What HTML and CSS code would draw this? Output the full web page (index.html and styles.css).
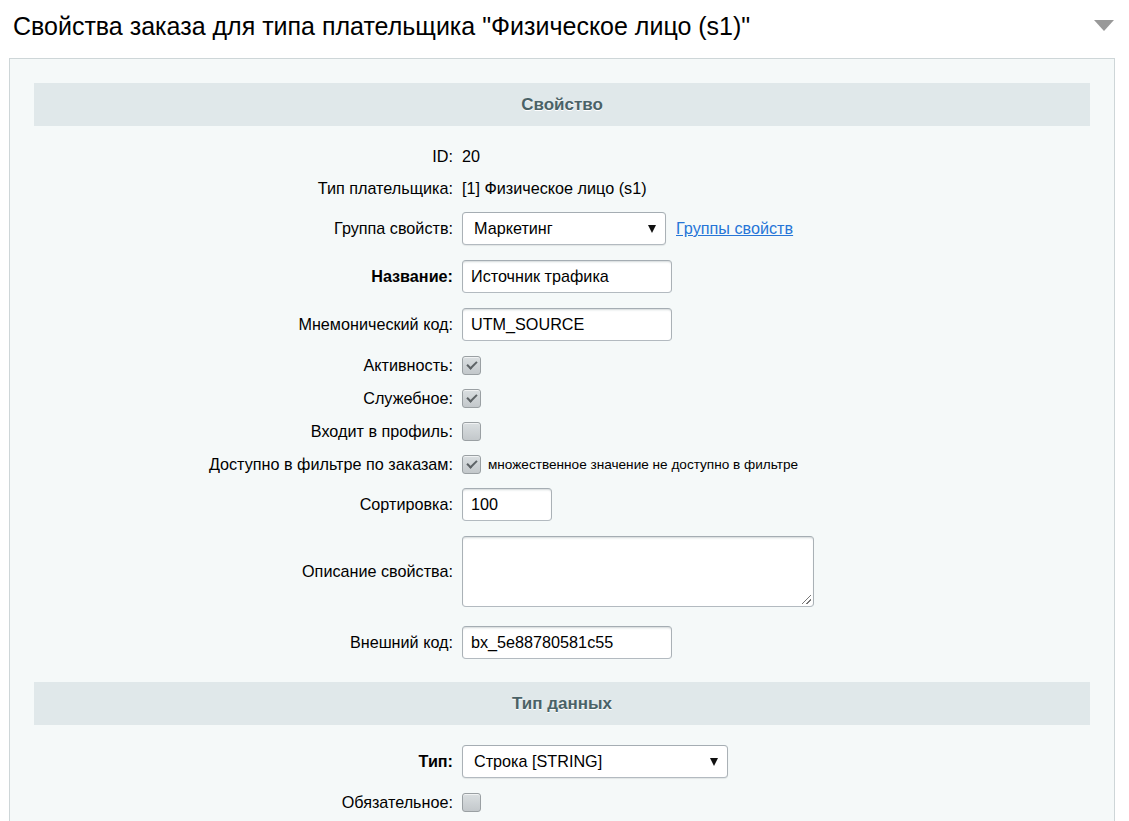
FILE: index.html
```html
<!DOCTYPE html>
<html lang="ru">
<head>
<meta charset="utf-8">
<title>Свойства заказа</title>
<link rel="stylesheet" href="styles.css">
</head>
<body>
<div class="page">
  <div class="title-bar">
    <h1 class="title">Свойства заказа для типа плательщика "Физическое лицо (s1)"</h1>
    <span class="collapse"></span>
  </div>
  <div class="panel">
    <div class="section-head">Свойство</div>
    <div class="row text-row">
      <div class="label">ID:</div>
      <div class="value">20</div>
    </div>
    <div class="row text-row">
      <div class="label">Тип плательщика:</div>
      <div class="value">[1] Физическое лицо (s1)</div>
    </div>
    <div class="row field-row">
      <div class="label">Группа свойств:</div>
      <div class="value">
        <div class="select sel-group"><span>Маркетинг</span><span class="arrow"></span></div>
        <a class="link" href="#">Группы свойств</a>
      </div>
    </div>
    <div class="row field-row">
      <div class="label bold">Название:</div>
      <div class="value"><div class="input w-name">Источник трафика</div></div>
    </div>
    <div class="row field-row">
      <div class="label">Мнемонический код:</div>
      <div class="value"><div class="input w-name">UTM_SOURCE</div></div>
    </div>
    <div class="row check-row">
      <div class="label">Активность:</div>
      <div class="value"><span class="cb checked"></span></div>
    </div>
    <div class="row check-row">
      <div class="label">Служебное:</div>
      <div class="value"><span class="cb checked"></span></div>
    </div>
    <div class="row check-row">
      <div class="label">Входит в профиль:</div>
      <div class="value"><span class="cb"></span></div>
    </div>
    <div class="row check-row">
      <div class="label">Доступно в фильтре по заказам:</div>
      <div class="value"><span class="cb checked"></span><span class="note">множественное значение не доступно в фильтре</span></div>
    </div>
    <div class="row field-row">
      <div class="label">Сортировка:</div>
      <div class="value"><div class="input w-sort">100</div></div>
    </div>
    <div class="row area-row">
      <div class="label">Описание свойства:</div>
      <div class="value"><div class="textarea"><span class="grip"></span></div></div>
    </div>
    <div class="row field-row">
      <div class="label">Внешний код:</div>
      <div class="value"><div class="input w-name">bx_5e88780581c55</div></div>
    </div>
    <div class="section-head second">Тип данных</div>
    <div class="row field-row">
      <div class="label bold">Тип:</div>
      <div class="value">
        <div class="select sel-type"><span>Строка [STRING]</span><span class="arrow"></span></div>
      </div>
    </div>
    <div class="row check-row">
      <div class="label">Обязательное:</div>
      <div class="value"><span class="cb"></span></div>
    </div>
  </div>
</div>
</body>
</html>
```

FILE: styles.css
```css
html, body {
  margin: 0;
  padding: 0;
  background: #fff;
}
body {
  font-family: "Liberation Sans", Arial, sans-serif;
  color: #000;
  overflow: hidden;
}
.page {
  padding: 0 14px 0 9px;
}
.title-bar {
  display: flex;
  align-items: center;
  justify-content: space-between;
  height: 58px;
  padding: 0 1px 0 4px;
}
.title {
  margin: 0;
  font-size: 25px;
  font-weight: normal;
  line-height: 28px;
  padding-bottom: 6px;
}
.collapse {
  width: 0;
  height: 0;
  border-left: 10px solid transparent;
  border-right: 10px solid transparent;
  border-top: 11px solid #999;
  margin-bottom: 8px;
}
.panel {
  background: #f5f9f9;
  border: 1px solid #ced6d8;
  border-bottom: 0;
  padding: 24px 24px 40px;
  min-height: 800px;
}
.section-head {
  height: 43px;
  background: #e0e8ea;
  color: #4b6267;
  font-weight: bold;
  font-size: 17px;
  text-shadow: 0 1px #fff;
  display: flex;
  align-items: center;
  justify-content: center;
  margin-bottom: 14px;
}
.section-head.second {
  margin-top: 16px;
  margin-bottom: 12px;
}
.row {
  display: flex;
  align-items: center;
  box-sizing: border-box;
  font-size: 16.2px;
}
.label {
  width: 419px;
  padding-right: 9px;
  text-align: right;
  flex: none;
  color: #000;
}
.label.bold {
  font-weight: bold;
}
.value {
  display: flex;
  align-items: center;
  flex: 1;
}
.text-row {
  height: 32px;
}
.field-row {
  height: 48px;
  padding: 8px 0 7px;
}
.check-row {
  height: 33px;
  padding: 8px 0 6px;
}
.area-row {
  height: 90px;
  padding: 8px 0 11px;
}
.input, .select, .textarea {
  box-sizing: border-box;
  background: #fff;
  border: 1px solid;
  border-color: #a5adb3 #aab1b6 #b3bac0 #aab1b6;
  border-radius: 4px;
  box-shadow: inset 0 2px 2px -1px rgba(180, 188, 191, 0.6);
}
.input, .select {
  height: 33px;
  display: flex;
  align-items: center;
  padding: 0 8px;
}
.w-name { width: 210px; }
.w-sort { width: 90px; }
.select {
  justify-content: space-between;
  padding: 0 8px 0 11px;
  box-shadow: 0 1px 1px rgba(0,0,0,0.08);
}
.sel-group { width: 204px; }
.sel-type { width: 266px; padding-left: 11px; }
.arrow {
  width: 0;
  height: 0;
  border-left: 4px solid transparent;
  border-right: 4px solid transparent;
  border-top: 8px solid #111;
  margin-right: 1px;
}
.link {
  margin-left: 10px;
  color: #2675d7;
  text-decoration: underline;
  font-size: 16.2px;
}
.textarea {
  width: 352px;
  height: 71px;
  position: relative;
}
.grip {
  position: absolute;
  right: 2px;
  bottom: 2px;
  width: 9px;
  height: 9px;
  background: linear-gradient(135deg, transparent 45%, #777 45%, #777 52%, transparent 52%, transparent 72%, #777 72%, #777 79%, transparent 79%);
}
.cb {
  box-sizing: border-box;
  width: 19px;
  height: 19px;
  border: 1px solid #9aa0a3;
  border-radius: 3px;
  background: linear-gradient(#dadfe1, #c3c8cb);
  box-shadow: inset 0 1px 0 rgba(255,255,255,0.6);
  position: relative;
  flex: none;
}
.cb.checked::after {
  content: "";
  position: absolute;
  left: 6px;
  top: 2px;
  width: 4px;
  height: 8px;
  border-right: 2px solid #5d6366;
  border-bottom: 2px solid #5d6366;
  transform: rotate(45deg);
}
.note {
  margin-left: 7px;
  font-size: 13.6px;
}
```
